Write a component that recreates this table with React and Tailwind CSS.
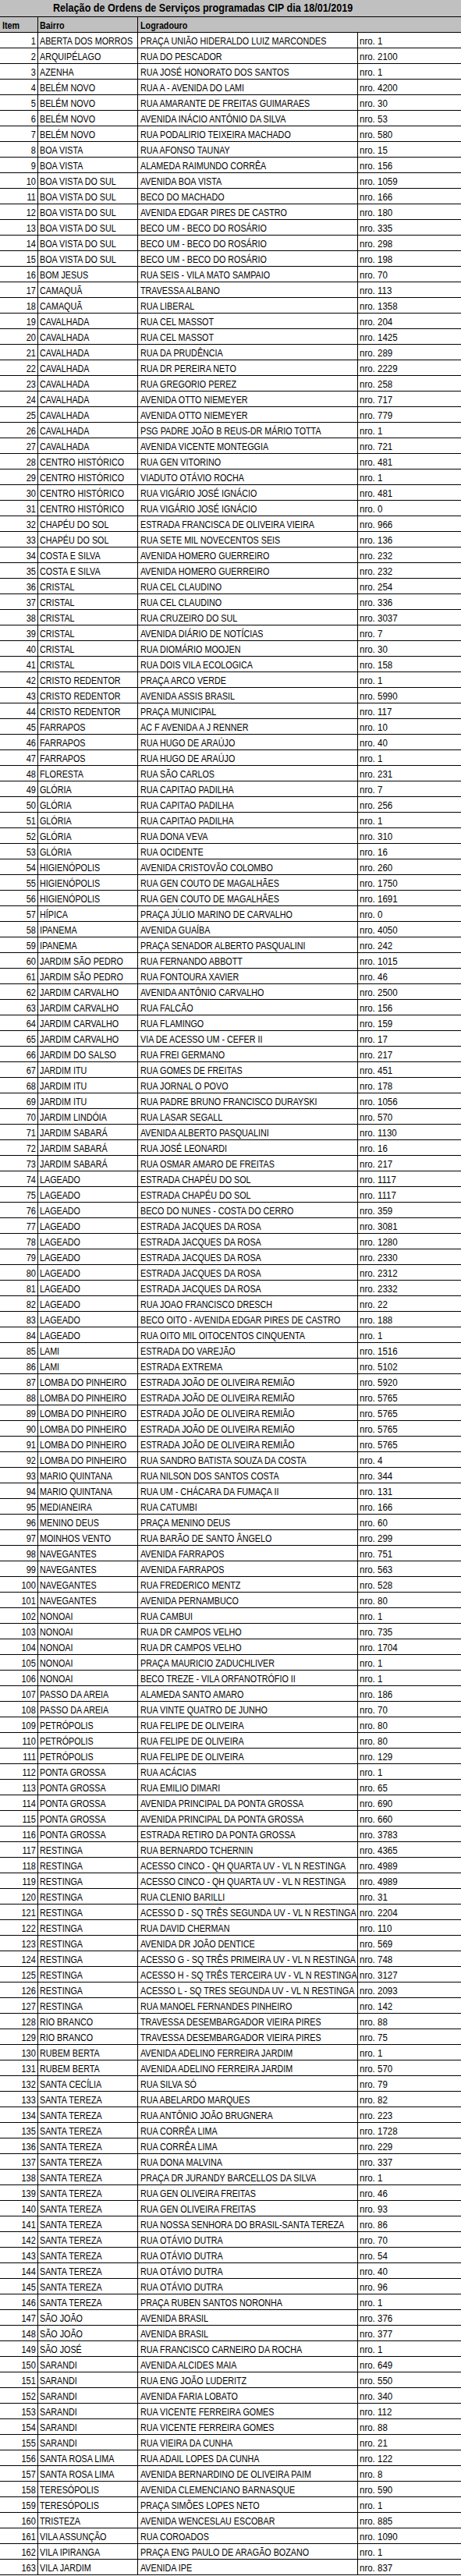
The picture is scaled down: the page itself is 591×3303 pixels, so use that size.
import React from 'react'

// Ordens de serviço CIP - 18/01/2019
const rows = [
  ['ABERTA DOS MORROS', 'PRAÇA UNIÃO HIDERALDO LUIZ MARCONDES', 1],
  ['ARQUIPÉLAGO', 'RUA DO PESCADOR', 2100],
  ['AZENHA', 'RUA JOSÉ HONORATO DOS SANTOS', 1],
  ['BELÉM NOVO', 'RUA A - AVENIDA DO LAMI', 4200],
  ['BELÉM NOVO', 'RUA AMARANTE DE FREITAS GUIMARAES', 30],
  ['BELÉM NOVO', 'AVENIDA INÁCIO ANTÔNIO DA SILVA', 53],
  ['BELÉM NOVO', 'RUA PODALIRIO TEIXEIRA MACHADO', 580],
  ['BOA VISTA', 'RUA AFONSO TAUNAY', 15],
  ['BOA VISTA', 'ALAMEDA RAIMUNDO CORRÊA', 156],
  ['BOA VISTA DO SUL', 'AVENIDA BOA VISTA', 1059],
  ['BOA VISTA DO SUL', 'BECO DO MACHADO', 166],
  ['BOA VISTA DO SUL', 'AVENIDA EDGAR PIRES DE CASTRO', 180],
  ['BOA VISTA DO SUL', 'BECO UM - BECO DO ROSÁRIO', 335],
  ['BOA VISTA DO SUL', 'BECO UM - BECO DO ROSÁRIO', 298],
  ['BOA VISTA DO SUL', 'BECO UM - BECO DO ROSÁRIO', 198],
  ['BOM JESUS', 'RUA SEIS - VILA MATO SAMPAIO', 70],
  ['CAMAQUÃ', 'TRAVESSA ALBANO', 113],
  ['CAMAQUÃ', 'RUA LIBERAL', 1358],
  ['CAVALHADA', 'RUA CEL MASSOT', 204],
  ['CAVALHADA', 'RUA CEL MASSOT', 1425],
  ['CAVALHADA', 'RUA DA PRUDÊNCIA', 289],
  ['CAVALHADA', 'RUA DR PEREIRA NETO', 2229],
  ['CAVALHADA', 'RUA GREGORIO PEREZ', 258],
  ['CAVALHADA', 'AVENIDA OTTO NIEMEYER', 717],
  ['CAVALHADA', 'AVENIDA OTTO NIEMEYER', 779],
  ['CAVALHADA', 'PSG PADRE JOÃO B REUS-DR MÁRIO TOTTA', 1],
  ['CAVALHADA', 'AVENIDA VICENTE MONTEGGIA', 721],
  ['CENTRO HISTÓRICO', 'RUA GEN VITORINO', 481],
  ['CENTRO HISTÓRICO', 'VIADUTO OTÁVIO ROCHA', 1],
  ['CENTRO HISTÓRICO', 'RUA VIGÁRIO JOSÉ IGNÁCIO', 481],
  ['CENTRO HISTÓRICO', 'RUA VIGÁRIO JOSÉ IGNÁCIO', 0],
  ['CHAPÉU DO SOL', 'ESTRADA FRANCISCA DE OLIVEIRA VIEIRA', 966],
  ['CHAPÉU DO SOL', 'RUA SETE MIL NOVECENTOS SEIS', 136],
  ['COSTA E SILVA', 'AVENIDA HOMERO GUERREIRO', 232],
  ['COSTA E SILVA', 'AVENIDA HOMERO GUERREIRO', 232],
  ['CRISTAL', 'RUA CEL CLAUDINO', 254],
  ['CRISTAL', 'RUA CEL CLAUDINO', 336],
  ['CRISTAL', 'RUA CRUZEIRO DO SUL', 3037],
  ['CRISTAL', 'AVENIDA DIÁRIO DE NOTÍCIAS', 7],
  ['CRISTAL', 'RUA DIOMÁRIO MOOJEN', 30],
  ['CRISTAL', 'RUA DOIS VILA ECOLOGICA', 158],
  ['CRISTO REDENTOR', 'PRAÇA ARCO VERDE', 1],
  ['CRISTO REDENTOR', 'AVENIDA ASSIS BRASIL', 5990],
  ['CRISTO REDENTOR', 'PRAÇA MUNICIPAL', 117],
  ['FARRAPOS', 'AC F AVENIDA A J RENNER', 10],
  ['FARRAPOS', 'RUA HUGO DE ARAÚJO', 40],
  ['FARRAPOS', 'RUA HUGO DE ARAÚJO', 1],
  ['FLORESTA', 'RUA SÃO CARLOS', 231],
  ['GLÓRIA', 'RUA CAPITAO PADILHA', 7],
  ['GLÓRIA', 'RUA CAPITAO PADILHA', 256],
  ['GLÓRIA', 'RUA CAPITAO PADILHA', 1],
  ['GLÓRIA', 'RUA DONA VEVA', 310],
  ['GLÓRIA', 'RUA OCIDENTE', 16],
  ['HIGIENÓPOLIS', 'AVENIDA CRISTOVÃO COLOMBO', 260],
  ['HIGIENÓPOLIS', 'RUA GEN COUTO DE MAGALHÃES', 1750],
  ['HIGIENÓPOLIS', 'RUA GEN COUTO DE MAGALHÃES', 1691],
  ['HÍPICA', 'PRAÇA JÚLIO MARINO DE CARVALHO', 0],
  ['IPANEMA', 'AVENIDA GUAÍBA', 4050],
  ['IPANEMA', 'PRAÇA SENADOR ALBERTO PASQUALINI', 242],
  ['JARDIM SÃO PEDRO', 'RUA FERNANDO ABBOTT', 1015],
  ['JARDIM SÃO PEDRO', 'RUA FONTOURA XAVIER', 46],
  ['JARDIM CARVALHO', 'AVENIDA ANTÔNIO CARVALHO', 2500],
  ['JARDIM CARVALHO', 'RUA FALCÃO', 156],
  ['JARDIM CARVALHO', 'RUA FLAMINGO', 159],
  ['JARDIM CARVALHO', 'VIA DE ACESSO UM - CEFER II', 17],
  ['JARDIM DO SALSO', 'RUA FREI GERMANO', 217],
  ['JARDIM ITU', 'RUA GOMES DE FREITAS', 451],
  ['JARDIM ITU', 'RUA JORNAL O POVO', 178],
  ['JARDIM ITU', 'RUA PADRE BRUNO FRANCISCO DURAYSKI', 1056],
  ['JARDIM LINDÓIA', 'RUA LASAR SEGALL', 570],
  ['JARDIM SABARÁ', 'AVENIDA ALBERTO PASQUALINI', 1130],
  ['JARDIM SABARÁ', 'RUA JOSÉ LEONARDI', 16],
  ['JARDIM SABARÁ', 'RUA OSMAR AMARO DE FREITAS', 217],
  ['LAGEADO', 'ESTRADA CHAPÉU DO SOL', 1117],
  ['LAGEADO', 'ESTRADA CHAPÉU DO SOL', 1117],
  ['LAGEADO', 'BECO DO NUNES - COSTA DO CERRO', 359],
  ['LAGEADO', 'ESTRADA JACQUES DA ROSA', 3081],
  ['LAGEADO', 'ESTRADA JACQUES DA ROSA', 1280],
  ['LAGEADO', 'ESTRADA JACQUES DA ROSA', 2330],
  ['LAGEADO', 'ESTRADA JACQUES DA ROSA', 2312],
  ['LAGEADO', 'ESTRADA JACQUES DA ROSA', 2332],
  ['LAGEADO', 'RUA JOAO FRANCISCO DRESCH', 22],
  ['LAGEADO', 'BECO OITO - AVENIDA EDGAR PIRES DE CASTRO', 188],
  ['LAGEADO', 'RUA OITO MIL OITOCENTOS CINQUENTA', 1],
  ['LAMI', 'ESTRADA DO VAREJÃO', 1516],
  ['LAMI', 'ESTRADA EXTREMA', 5102],
  ['LOMBA DO PINHEIRO', 'ESTRADA JOÃO DE OLIVEIRA REMIÃO', 5920],
  ['LOMBA DO PINHEIRO', 'ESTRADA JOÃO DE OLIVEIRA REMIÃO', 5765],
  ['LOMBA DO PINHEIRO', 'ESTRADA JOÃO DE OLIVEIRA REMIÃO', 5765],
  ['LOMBA DO PINHEIRO', 'ESTRADA JOÃO DE OLIVEIRA REMIÃO', 5765],
  ['LOMBA DO PINHEIRO', 'ESTRADA JOÃO DE OLIVEIRA REMIÃO', 5765],
  ['LOMBA DO PINHEIRO', 'RUA SANDRO BATISTA SOUZA DA COSTA', 4],
  ['MARIO QUINTANA', 'RUA NILSON DOS SANTOS COSTA', 344],
  ['MARIO QUINTANA', 'RUA UM - CHÁCARA DA FUMAÇA II', 131],
  ['MEDIANEIRA', 'RUA CATUMBI', 166],
  ['MENINO DEUS', 'PRAÇA MENINO DEUS', 60],
  ['MOINHOS VENTO', 'RUA BARÃO DE SANTO ÂNGELO', 299],
  ['NAVEGANTES', 'AVENIDA FARRAPOS', 751],
  ['NAVEGANTES', 'AVENIDA FARRAPOS', 563],
  ['NAVEGANTES', 'RUA FREDERICO MENTZ', 528],
  ['NAVEGANTES', 'AVENIDA PERNAMBUCO', 80],
  ['NONOAI', 'RUA CAMBUI', 1],
  ['NONOAI', 'RUA DR CAMPOS VELHO', 735],
  ['NONOAI', 'RUA DR CAMPOS VELHO', 1704],
  ['NONOAI', 'PRAÇA MAURICIO ZADUCHLIVER', 1],
  ['NONOAI', 'BECO TREZE - VILA ORFANOTRÓFIO II', 1],
  ['PASSO DA AREIA', 'ALAMEDA SANTO AMARO', 186],
  ['PASSO DA AREIA', 'RUA VINTE QUATRO DE JUNHO', 70],
  ['PETRÓPOLIS', 'RUA FELIPE DE OLIVEIRA', 80],
  ['PETRÓPOLIS', 'RUA FELIPE DE OLIVEIRA', 80],
  ['PETRÓPOLIS', 'RUA FELIPE DE OLIVEIRA', 129],
  ['PONTA GROSSA', 'RUA ACÁCIAS', 1],
  ['PONTA GROSSA', 'RUA EMILIO DIMARI', 65],
  ['PONTA GROSSA', 'AVENIDA PRINCIPAL DA PONTA GROSSA', 690],
  ['PONTA GROSSA', 'AVENIDA PRINCIPAL DA PONTA GROSSA', 660],
  ['PONTA GROSSA', 'ESTRADA RETIRO DA PONTA GROSSA', 3783],
  ['RESTINGA', 'RUA BERNARDO TCHERNIN', 4365],
  ['RESTINGA', 'ACESSO CINCO - QH QUARTA UV - VL N RESTINGA', 4989],
  ['RESTINGA', 'ACESSO CINCO - QH QUARTA UV - VL N RESTINGA', 4989],
  ['RESTINGA', 'RUA CLENIO BARILLI', 31],
  ['RESTINGA', 'ACESSO D - SQ TRÊS SEGUNDA UV - VL N RESTINGA', 2204],
  ['RESTINGA', 'RUA DAVID CHERMAN', 110],
  ['RESTINGA', 'AVENIDA DR JOÃO DENTICE', 569],
  ['RESTINGA', 'ACESSO G - SQ TRÊS PRIMEIRA UV - VL N RESTINGA', 748],
  ['RESTINGA', 'ACESSO H - SQ TRÊS TERCEIRA UV - VL N RESTINGA', 3127],
  ['RESTINGA', 'ACESSO L - SQ TRES SEGUNDA UV - VL N RESTINGA', 2093],
  ['RESTINGA', 'RUA MANOEL FERNANDES PINHEIRO', 142],
  ['RIO BRANCO', 'TRAVESSA DESEMBARGADOR VIEIRA PIRES', 88],
  ['RIO BRANCO', 'TRAVESSA DESEMBARGADOR VIEIRA PIRES', 75],
  ['RUBEM BERTA', 'AVENIDA ADELINO FERREIRA JARDIM', 1],
  ['RUBEM BERTA', 'AVENIDA ADELINO FERREIRA JARDIM', 570],
  ['SANTA CECÍLIA', 'RUA SILVA SÓ', 79],
  ['SANTA TEREZA', 'RUA ABELARDO MARQUES', 82],
  ['SANTA TEREZA', 'RUA ANTÔNIO JOÃO BRUGNERA', 223],
  ['SANTA TEREZA', 'RUA CORRÊA LIMA', 1728],
  ['SANTA TEREZA', 'RUA CORRÊA LIMA', 229],
  ['SANTA TEREZA', 'RUA DONA MALVINA', 337],
  ['SANTA TEREZA', 'PRAÇA DR JURANDY BARCELLOS DA SILVA', 1],
  ['SANTA TEREZA', 'RUA GEN OLIVEIRA FREITAS', 46],
  ['SANTA TEREZA', 'RUA GEN OLIVEIRA FREITAS', 93],
  ['SANTA TEREZA', 'RUA NOSSA SENHORA DO BRASIL-SANTA TEREZA', 86],
  ['SANTA TEREZA', 'RUA OTÁVIO DUTRA', 70],
  ['SANTA TEREZA', 'RUA OTÁVIO DUTRA', 54],
  ['SANTA TEREZA', 'RUA OTÁVIO DUTRA', 40],
  ['SANTA TEREZA', 'RUA OTÁVIO DUTRA', 96],
  ['SANTA TEREZA', 'PRAÇA RUBEN SANTOS NORONHA', 1],
  ['SÃO JOÃO', 'AVENIDA BRASIL', 376],
  ['SÃO JOÃO', 'AVENIDA BRASIL', 377],
  ['SÃO JOSÉ', 'RUA FRANCISCO CARNEIRO DA ROCHA', 1],
  ['SARANDI', 'AVENIDA ALCIDES MAIA', 649],
  ['SARANDI', 'RUA ENG JOÃO LUDERITZ', 550],
  ['SARANDI', 'AVENIDA FARIA LOBATO', 340],
  ['SARANDI', 'RUA VICENTE FERREIRA GOMES', 112],
  ['SARANDI', 'RUA VICENTE FERREIRA GOMES', 88],
  ['SARANDI', 'RUA VIEIRA DA CUNHA', 21],
  ['SANTA ROSA LIMA', 'RUA ADAIL LOPES DA CUNHA', 122],
  ['SANTA ROSA LIMA', 'AVENIDA BERNARDINO DE OLIVEIRA PAIM', 8],
  ['TERESÓPOLIS', 'AVENIDA CLEMENCIANO BARNASQUE', 590],
  ['TERESÓPOLIS', 'PRAÇA SIMÕES LOPES NETO', 1],
  ['TRISTEZA', 'AVENIDA WENCESLAU ESCOBAR', 885],
  ['VILA ASSUNÇÃO', 'RUA COROADOS', 1090],
  ['VILA IPIRANGA', 'PRAÇA ENG PAULO DE ARAGÃO BOZANO', 1],
  ['VILA JARDIM', 'AVENIDA IPE', 837],
]

// Calibri-like: Arial metrics squeezed horizontally
const cell = 'flex items-end leading-[15px] whitespace-nowrap overflow-visible'
const narrow = 'inline-block scale-x-[0.86] origin-left'
const digits = 'inline-block scale-x-[0.92] origin-left'
const digitsRight = 'inline-block scale-x-[0.88] origin-right'

export default function App() {
  return (
    <div className="w-[591px] bg-white text-black text-[12.5px] font-['Liberation_Sans',Arial,sans-serif]">
      {/* Title */}
      <div className="h-[22px] bg-[#c0c0c0] border-b border-black pl-[68px] text-[14px] font-bold leading-[21px] whitespace-nowrap">
        <span className="inline-block scale-x-[0.9] origin-left">
          Relação de Ordens de Serviços programadas CIP dia 18/01/2019
        </span>
      </div>

      {/* Header */}
      <div className="flex h-5 bg-[#c0c0c0] border-b border-black font-bold">
        <div className={`${cell} w-[49px] shrink-0 border-r border-black pl-[3px]`}>
          <span className={narrow}>Item</span>
        </div>
        <div className={`${cell} w-[128px] shrink-0 border-r border-black pl-[2px]`}>
          <span className={narrow}>Bairro</span>
        </div>
        <div className={`${cell} flex-1 pl-[3px]`}>
          <span className={narrow}>Logradouro</span>
        </div>
      </div>

      {rows.map(([bairro, logradouro, nro], i) => (
        <div key={i} className="flex h-5 border-b border-black">
          <div className={`${cell} w-[49px] shrink-0 border-r border-black justify-end pr-[2px]`}>
            <span className={digitsRight}>{i + 1}</span>
          </div>
          <div className={`${cell} w-[128px] shrink-0 border-r border-black pl-[2px]`}>
            <span className={narrow}>{bairro}</span>
          </div>
          <div className={`${cell} w-[282px] shrink-0 border-r border-black pl-[3px]`}>
            <span className={narrow}>{logradouro}</span>
          </div>
          <div className={`${cell} flex-1 pl-[2px]`}>
            <span className={digits}>nro. {nro}</span>
          </div>
        </div>
      ))}
    </div>
  )
}
